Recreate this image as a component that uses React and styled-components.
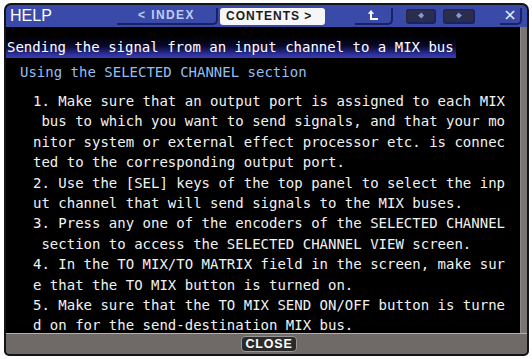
import React from "react";
import styled, { createGlobalStyle } from "styled-components";

const Global = createGlobalStyle`
  html, body { margin: 0; padding: 0; background: #ffffff; }
  #root { width: 532px; height: 359px; }
`;

const Window = styled.div`
  box-sizing: border-box;
  margin: 3px 0 0 4px;
  width: 525px;
  height: 353px;
  border: 2px solid #141414;
  border-radius: 7px 7px 5px 5px;
  overflow: hidden;
  display: flex;
  flex-direction: column;
  background: #000;
`;

const TitleBar = styled.div`
  height: 22px;
  flex: none;
  display: flex;
  align-items: center;
  background: #3a4aa8;
  padding: 0 5px 0 4px;
`;

const Title = styled.div`
  flex: none;
  width: 107px;
  font-family: "Liberation Sans", Arial, sans-serif;
  font-size: 16px;
  color: #ffffff;
  line-height: 22px;
`;

const Tab = styled.div`
  flex: none;
  box-sizing: border-box;
  height: 17px;
  width: ${(p) => p.$w}px;
  margin-left: ${(p) => p.$ml || 0}px;
  display: flex;
  align-items: center;
  justify-content: ${(p) => (p.$active ? "flex-start" : "center")};
  padding-left: ${(p) => (p.$active ? 6 : 0)}px;
  font-family: "Liberation Sans", Arial, sans-serif;
  font-weight: bold;
  font-size: 12px;
  letter-spacing: ${(p) => (p.$active ? 1 : 1.4)}px;
  color: ${(p) => (p.$active ? "#1a1a1a" : "#c4ccf4")};
  background: ${(p) => (p.$active ? "#f6f6f6" : "transparent")};
  border-radius: ${(p) => (p.$active ? "3px" : "0 0 5px 0")};
  border-bottom: ${(p) => (p.$active ? "none" : "2px solid #1a2262")};
  border-right: ${(p) => (p.$active ? "none" : "2px solid #1a2262")};
`;

const IconButton = styled.div`
  flex: none;
  box-sizing: border-box;
  height: ${(p) => p.$h || 15}px;
  width: ${(p) => p.$w}px;
  margin-left: ${(p) => p.$ml};
  display: flex;
  align-items: center;
  justify-content: center;
  background: ${(p) => (p.$dark ? "#2b2d4e" : "transparent")};
  border-bottom: 2px solid #1a2262;
  border-right: 2px solid #1a2262;
  border-left: ${(p) => (p.$dark ? "1px solid #222440" : "none")};
  border-top: ${(p) => (p.$dark ? "1px solid #222440" : "none")};
  border-radius: ${(p) => (p.$dark ? "3px" : "0 0 5px 0")};
`;

const CloseX = styled.div`
  flex: none;
  box-sizing: border-box;
  width: 22px;
  height: 17px;
  margin-left: 25px;
  display: flex;
  align-items: center;
  justify-content: center;
  border-bottom: 2px solid #1a2262;
  border-right: 2px solid #1a2262;
  border-radius: 0 0 5px 0;
  font-family: "DejaVu Sans", sans-serif;
  font-size: 16px;
  line-height: 1;
  color: #eef0fa;
`;

const Main = styled.div`
  flex: 1;
  display: flex;
  min-height: 0;
`;

const Content = styled.div`
  flex: 1;
  background: #000;
  display: flex;
  flex-direction: column;
  align-items: flex-start;
  padding-top: 9px;
`;

const Scroll = styled.div`
  width: 6px;
  background: #7a7472;
  border-left: 1px solid #8e8886;
  flex: none;
`;

const Mono = styled.div`
  font-family: "DejaVu Sans Mono", "Liberation Mono", monospace;
  font-size: 14px;
  white-space: pre;
`;

const Heading = styled(Mono)`
  height: 22px;
  line-height: 22px;
  padding: 0 2px 0 1px;
  color: #ffffff;
  background: linear-gradient(180deg, #000 0%, #08082a 45%, #2e32a0 85%, #3a3cb0 100%);
`;

const SubHeading = styled(Mono)`
  margin-top: 4px;
  padding-left: 14px;
  line-height: 20px;
  color: #94bff0;
`;

const Body = styled(Mono)`
  margin-top: 9px;
  padding-left: 27px;
  line-height: 20.4px;
  color: #f2f2f2;
`;

const BottomBar = styled.div`
  height: 20px;
  flex: none;
  border-top: 1px solid #b4b0ae;
  background: #6f6a68;
  display: flex;
  align-items: center;
  justify-content: center;
`;

const CloseButton = styled.div`
  box-sizing: border-box;
  margin-left: 5px;
  width: 56px;
  height: 16px;
  display: flex;
  align-items: center;
  justify-content: center;
  background: #2a2a2a;
  border: 1px solid #9a9694;
  border-radius: 4px;
  font-family: "Liberation Sans", Arial, sans-serif;
  font-weight: bold;
  font-size: 12.5px;
  letter-spacing: 0.8px;
  color: #ffffff;
`;

const lines = [
  "1. Make sure that an output port is assigned to each MIX",
  " bus to which you want to send signals, and that your mo",
  "nitor system or external effect processor etc. is connec",
  "ted to the corresponding output port.",
  "2. Use the [SEL] keys of the top panel to select the inp",
  "ut channel that will send signals to the MIX buses.",
  "3. Press any one of the encoders of the SELECTED CHANNEL",
  " section to access the SELECTED CHANNEL VIEW screen.",
  "4. In the TO MIX/TO MATRIX field in the screen, make sur",
  "e that the TO MIX button is turned on.",
  "5. Make sure that the TO MIX SEND ON/OFF button is turne",
  "d on for the send-destination MIX bus.",
];

const UpIcon = () => (
  <svg width="12" height="12" viewBox="0 0 12 12">
    <path d="M4 1 L0.8 4.8 H7.2 Z" fill="#ffffff" />
    <path d="M4 4 V10 H11" stroke="#ffffff" strokeWidth="2" fill="none" />
  </svg>
);

const NavIcon = ({ dir }) => (
  <svg width="8" height="7" viewBox="0 0 8 7">
    {dir === "left" ? (
      <path d="M1 3.5 L4.5 0.5 L7 3.5 L4.5 6.5 Z" fill="#7d9ad6" />
    ) : (
      <path d="M1 3.5 L3.5 0.5 L7 3.5 L3.5 6.5 Z" fill="#7d9ad6" />
    )}
  </svg>
);

export default function App() {
  return (
    <>
      <Global />
      <Window>
        <TitleBar>
          <Title>HELP</Title>
          <Tab $w={101}>&lt; INDEX</Tab>
          <Tab $w={105} $ml={2} $active>CONTENTS &gt;</Tab>
          <IconButton $w={38} $ml="30px" $h={17}>
            <UpIcon />
          </IconButton>
          <IconButton $w={30} $ml="13px" $dark>
            <NavIcon dir="left" />
          </IconButton>
          <IconButton $w={32} $ml="7px" $dark>
            <NavIcon dir="right" />
          </IconButton>
          <CloseX>×</CloseX>
        </TitleBar>
        <Main>
          <Content>
            <Heading>Sending the signal from an input channel to a MIX bus</Heading>
            <SubHeading>Using the SELECTED CHANNEL section</SubHeading>
            <Body>{lines.join("\n")}</Body>
          </Content>
          <Scroll />
        </Main>
        <BottomBar>
          <CloseButton>CLOSE</CloseButton>
        </BottomBar>
      </Window>
    </>
  );
}
